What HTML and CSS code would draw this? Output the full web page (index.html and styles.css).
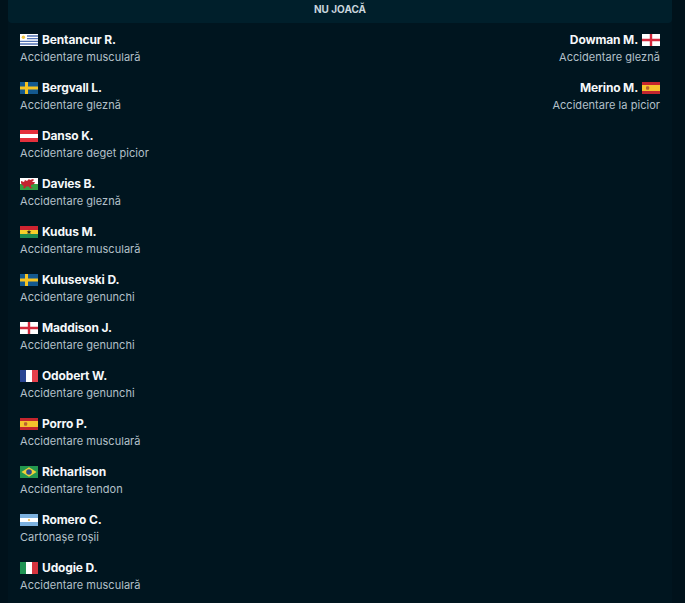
FILE: index.html
```html
<!DOCTYPE html>
<html lang="ro">
<head>
<meta charset="utf-8">
<title>Nu joacă</title>
<link rel="stylesheet" href="styles.css">
</head>
<body>
<svg class="defs" width="0" height="0" aria-hidden="true">
  <defs>
    <symbol id="uy" viewBox="0 0 18 12"><rect width="18" height="12" fill="#fff"/><path d="M7 1.33h11v1.33H7zM7 4h11v1.33H7zM0 6.67h18V8H0zM0 9.33h18v1.34H0z" fill="#5273b5"/><circle cx="3.4" cy="3.2" r="1.7" fill="#f0c53f"/></symbol>
    <symbol id="se" viewBox="0 0 18 12"><rect width="18" height="12" fill="#14598f"/><path d="M5 0h3v12H5zM0 4.5h18v3H0z" fill="#f5c422"/></symbol>
    <symbol id="at" viewBox="0 0 18 12"><rect width="18" height="12" fill="#e4303c"/><rect y="4" width="18" height="4" fill="#fff"/></symbol>
    <symbol id="wls" viewBox="0 0 18 12"><rect width="18" height="6" fill="#fff"/><rect y="6" width="18" height="6" fill="#35a043"/><path d="M1 3l3 1 1-2 2 1 2-2 1 1 3-1 1 1-2 2 3 0-1 2-3 1v2l2 1-3 .6-1-2-3 0-1 2-2-.6 1-2-2-1-1-2z" fill="#c4242f"/></symbol>
    <symbol id="gh" viewBox="0 0 18 12"><rect width="18" height="4" fill="#ce2430"/><rect y="4" width="18" height="4" fill="#f6cf2a"/><rect y="8" width="18" height="4" fill="#1e8a50"/><path d="M9 3.8l.7 1.5 1.6.1-1.2 1 .4 1.6L9 7.2 7.5 8l.4-1.6-1.2-1 1.6-.1z" fill="#222"/></symbol>
    <symbol id="en" viewBox="0 0 18 12"><rect width="18" height="12" fill="#fff"/><path d="M7.8 0h2.4v12H7.8zM0 4.8h18v2.4H0z" fill="#d3283c"/></symbol>
    <symbol id="fr" viewBox="0 0 18 12"><rect width="6" height="12" fill="#2a4592"/><rect x="6" width="6" height="12" fill="#fff"/><rect x="12" width="6" height="12" fill="#e63f4b"/></symbol>
    <symbol id="es" viewBox="0 0 18 12"><rect width="18" height="12" fill="#c4262e"/><rect y="3" width="18" height="6" fill="#f5c32c"/><rect x="4" y="4.2" width="3.2" height="3.6" rx="1" fill="#b8612f"/></symbol>
    <symbol id="br" viewBox="0 0 18 12"><rect width="18" height="12" fill="#24984f"/><path d="M9 1.2L16.6 6 9 10.8 1.4 6z" fill="#eed23a"/><circle cx="9" cy="6" r="2.8" fill="#2b4a8e"/></symbol>
    <symbol id="ar" viewBox="0 0 18 12"><rect width="18" height="12" fill="#7cb1df"/><rect y="4" width="18" height="4" fill="#fff"/><circle cx="9" cy="6" r="1.1" fill="#f0bb50"/></symbol>
    <symbol id="it" viewBox="0 0 18 12"><rect width="6" height="12" fill="#1f9353"/><rect x="6" width="6" height="12" fill="#fff"/><rect x="12" width="6" height="12" fill="#d6343f"/></symbol>
  </defs>
</svg>
<main class="panel">
  <h2 class="title">NU JOACĂ</h2>
  <div class="columns">
    <ul class="team">
      <li class="player"><div class="name"><svg class="flag"><use href="#uy"/></svg><span>Bentancur R.</span></div><p class="reason">Accidentare musculară</p></li>
      <li class="player"><div class="name"><svg class="flag"><use href="#se"/></svg><span>Bergvall L.</span></div><p class="reason">Accidentare gleznă</p></li>
      <li class="player"><div class="name"><svg class="flag"><use href="#at"/></svg><span>Danso K.</span></div><p class="reason">Accidentare deget picior</p></li>
      <li class="player"><div class="name"><svg class="flag"><use href="#wls"/></svg><span>Davies B.</span></div><p class="reason">Accidentare gleznă</p></li>
      <li class="player"><div class="name"><svg class="flag"><use href="#gh"/></svg><span>Kudus M.</span></div><p class="reason">Accidentare musculară</p></li>
      <li class="player"><div class="name"><svg class="flag"><use href="#se"/></svg><span>Kulusevski D.</span></div><p class="reason">Accidentare genunchi</p></li>
      <li class="player"><div class="name"><svg class="flag"><use href="#en"/></svg><span>Maddison J.</span></div><p class="reason">Accidentare genunchi</p></li>
      <li class="player"><div class="name"><svg class="flag"><use href="#fr"/></svg><span>Odobert W.</span></div><p class="reason">Accidentare genunchi</p></li>
      <li class="player"><div class="name"><svg class="flag"><use href="#es"/></svg><span>Porro P.</span></div><p class="reason">Accidentare musculară</p></li>
      <li class="player"><div class="name"><svg class="flag"><use href="#br"/></svg><span>Richarlison</span></div><p class="reason">Accidentare tendon</p></li>
      <li class="player"><div class="name"><svg class="flag"><use href="#ar"/></svg><span>Romero C.</span></div><p class="reason">Cartonașe roșii</p></li>
      <li class="player"><div class="name"><svg class="flag"><use href="#it"/></svg><span>Udogie D.</span></div><p class="reason">Accidentare musculară</p></li>
    </ul>
    <ul class="team team-away">
      <li class="player"><div class="name"><span>Dowman M.</span><svg class="flag"><use href="#en"/></svg></div><p class="reason">Accidentare gleznă</p></li>
      <li class="player"><div class="name"><span>Merino M.</span><svg class="flag"><use href="#es"/></svg></div><p class="reason">Accidentare la picior</p></li>
    </ul>
  </div>
</main>
</body>
</html>
```
FILE: styles.css
```css
html, body {
  margin: 0;
  padding: 0;
  height: 100%;
  background: #00121b;
  overflow: hidden;
}
.defs {
  position: absolute;
}
.panel {
  margin: 0 13px 0 8px;
  min-height: 603px;
  background: #00151f;
  font-family: Inter, "Noto Sans", sans-serif;
  font-size: 11px;
}
.title {
  margin: 0;
  height: 23px;
  padding-top: 1px;
  box-sizing: border-box;
  background: #001f2b;
  border-radius: 0 0 4px 4px;
  color: #c9d5dd;
  font-size: 10px;
  font-weight: 700;
  line-height: 16px;
  text-align: center;
}
.columns {
  display: flex;
  justify-content: space-between;
  padding: 0 12px;
}
.team {
  list-style: none;
  margin: 0;
  padding: 0;
}
.player {
  height: 48px;
  padding-top: 9px;
  box-sizing: border-box;
}
.name {
  display: flex;
  align-items: center;
  gap: 4px;
  height: 16px;
  color: #f5f8fa;
  font-size: 12px;
  font-weight: 700;
  line-height: 16px;
  letter-spacing: -0.15px;
}
.flag {
  width: 18px;
  height: 12px;
  flex: none;
}
.reason {
  margin: 1px 0 0;
  color: #b3c0c9;
  font-size: 11px;
  line-height: 16px;
  letter-spacing: 0.04px;
}
.team-away .name {
  justify-content: flex-end;
}
.team-away .reason {
  text-align: right;
}
```
